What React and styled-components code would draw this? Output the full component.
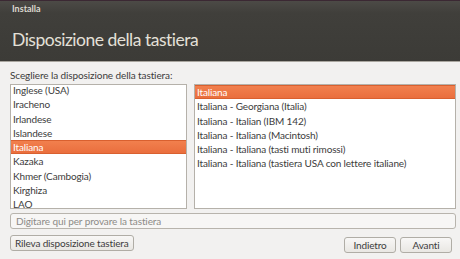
import React from 'react';
import styled, { createGlobalStyle } from 'styled-components';

const GlobalStyle = createGlobalStyle`
  html, body {
    margin: 0;
    padding: 0;
    background: #f2f1f0;
  }
  body {
    font-family: Lato, "Noto Sans", sans-serif;
    color: #3c3c3c;
  }
`;

const layouts = [
  'Inglese (USA)',
  'Iracheno',
  'Irlandese',
  'Islandese',
  'Italiana',
  'Kazaka',
  'Khmer (Cambogia)',
  'Kirghiza',
  'LAO',
  'Lettone',
];

const variants = [
  'Italiana',
  'Italiana - Georgiana (Italia)',
  'Italiana - Italian (IBM 142)',
  'Italiana - Italiana (Macintosh)',
  'Italiana - Italiana (tasti muti rimossi)',
  'Italiana - Italiana (tastiera USA con lettere italiane)',
];

const Window = styled.div`
  width: 460px;
  height: 259px;
  display: flex;
  flex-direction: column;
  overflow: hidden;
  background: #f2f1f0;
`;

const Header = styled.header`
  height: 62px;
  box-sizing: border-box;
  border-top: 1px solid #3b2833;
  border-bottom: 1px solid #a9a69f;
  background: linear-gradient(#4c4a46 0px, #403f3b 12px, #3c3b37 100%);
  display: flex;
  flex-direction: column;
  padding: 0 12px;
`;

const AppName = styled.div`
  font-size: 9px;
  font-weight: 700;
  color: #dcd8cf;
  margin-top: 2px;
  line-height: 12px;
`;

const Title = styled.h1`
  margin: 14px 0 0;
  font-size: 17.5px;
  font-weight: 400;
  letter-spacing: -0.5px;
  color: #e4e0d8;
  line-height: 22px;
`;

const Body = styled.main`
  flex: 1;
  padding: 6px 4px 0 10px;
  display: flex;
  flex-direction: column;
`;

const Label = styled.div`
  font-size: 10px;
  letter-spacing: -0.1px;
  line-height: 14px;
  margin-bottom: 2px;
`;

const Lists = styled.div`
  display: flex;
  gap: 7px;
  height: 125px;
`;

const ListBox = styled.div`
  width: ${p => p.$width}px;
  height: 100%;
  box-sizing: border-box;
  border: 1px solid #b5b1aa;
  background: #ffffff;
  overflow: hidden;
`;

const Rows = styled.div`
  margin-top: ${p => p.$offset || 0}px;
`;

const Row = styled.div`
  height: 14.25px;
  line-height: 14.25px;
  padding-left: 2px;
  font-size: 10px;
  letter-spacing: -0.15px;
  white-space: nowrap;
  color: ${p => (p.$active ? '#ffffff' : '#3c3c3c')};
  background: ${p =>
    p.$active ? 'linear-gradient(#f2814f, #e96d3c)' : 'transparent'};
  box-shadow: ${p => (p.$active ? 'inset 0 1px 0 #d9602f, inset 0 -1px 0 #d9602f' : 'none')};
`;

const TestInput = styled.input`
  margin-top: 4px;
  width: 446px;
  height: 16px;
  box-sizing: border-box;
  border: 1px solid #b8b4ad;
  border-radius: 3px;
  background: #f7f6f5;
  padding: 0 5px;
  font-family: inherit;
  font-size: 10px;
  line-height: 14px;
  letter-spacing: -0.1px;
  color: #3c3c3c;
  &::placeholder {
    color: #8d8b87;
  }
`;

const Footer = styled.div`
  display: flex;
  align-items: flex-start;
  margin-top: 6px;
  padding-right: 4px;
`;

const Button = styled.button`
  height: 16px;
  min-width: ${p => p.$min || 0}px;
  box-sizing: border-box;
  padding: 0 4px;
  border: 1px solid #b0ada6;
  border-radius: 3px;
  background: linear-gradient(#f8f7f6, #e9e7e3);
  font-family: inherit;
  font-size: 10px;
  letter-spacing: -0.15px;
  line-height: 14px;
  color: #3c3c3c;
`;

const Spacer = styled.div`
  flex: 1;
`;

const NavGroup = styled.div`
  display: flex;
  gap: 4px;
  margin-top: 2px;
`;

export default function App() {
  return (
    <Window>
      <GlobalStyle />
      <Header>
        <AppName>Installa</AppName>
        <Title>Disposizione della tastiera</Title>
      </Header>
      <Body>
        <Label>Scegliere la disposizione della tastiera:</Label>
        <Lists>
          <ListBox $width={177}>
            <Rows $offset={-2}>
              {layouts.map(name => (
                <Row key={name} $active={name === 'Italiana'}>{name}</Row>
              ))}
            </Rows>
          </ListBox>
          <ListBox $width={262}>
            <Rows>
              {variants.map((name, i) => (
                <Row key={name} $active={i === 0}>{name}</Row>
              ))}
            </Rows>
          </ListBox>
        </Lists>
        <TestInput placeholder="Digitare qui per provare la tastiera" />
        <Footer>
          <Button>Rileva disposizione tastiera</Button>
          <Spacer />
          <NavGroup>
            <Button $min={52}>Indietro</Button>
            <Button $min={52}>Avanti</Button>
          </NavGroup>
        </Footer>
      </Body>
    </Window>
  );
}
